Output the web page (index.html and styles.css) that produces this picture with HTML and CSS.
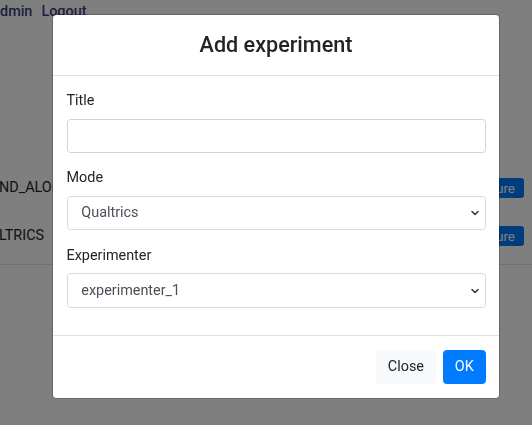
FILE: index.html
```html
<!DOCTYPE html>
<html lang="en">
<head>
<meta charset="utf-8">
<title>Add experiment</title>
<link rel="stylesheet" href="styles.css">
</head>
<body>
<div class="page">
  <nav class="topnav">
    <a class="nav-link nav-first">Admin</a>
    <a class="nav-link">Logout</a>
  </nav>
  <div class="table">
    <div class="table-row">
      <span class="cell-mode">STAND_ALONE</span>
      <button class="btn-configure">Configure</button>
    </div>
    <div class="table-row">
      <span class="cell-mode cell-mode-q">QUALTRICS</span>
      <button class="btn-configure">Configure</button>
    </div>
  </div>
</div>

<div class="backdrop"></div>

<div class="modal">
  <div class="modal-content">
    <div class="modal-header">
      <h4 class="modal-title">Add experiment</h4>
    </div>
    <div class="modal-body">
      <div class="form-group">
        <label class="form-label">Title</label>
        <input class="form-control" type="text">
      </div>
      <div class="form-group">
        <label class="form-label">Mode</label>
        <div class="select-wrap">
          <select class="form-select"><option>Qualtrics</option></select>
          <svg class="chevron" width="8" height="5" viewBox="0 0 8 5"><path d="M1 1L4 4L7 1" fill="none" stroke="#343a40" stroke-width="1.6" stroke-linecap="round" stroke-linejoin="round"/></svg>
        </div>
      </div>
      <div class="form-group">
        <label class="form-label">Experimenter</label>
        <div class="select-wrap">
          <select class="form-select"><option>experimenter_1</option></select>
          <svg class="chevron" width="8" height="5" viewBox="0 0 8 5"><path d="M1 1L4 4L7 1" fill="none" stroke="#343a40" stroke-width="1.6" stroke-linecap="round" stroke-linejoin="round"/></svg>
        </div>
      </div>
    </div>
    <div class="modal-footer">
      <button class="btn btn-light">Close</button>
      <button class="btn btn-primary">OK</button>
    </div>
  </div>
</div>
</body>
</html>
```

FILE: styles.css
```css
html, body {
  margin: 0;
  padding: 0;
}
body {
  width: 532px;
  height: 425px;
  overflow: hidden;
  background: #fff;
  font-family: Roboto, "Liberation Sans", sans-serif;
  font-size: 14.4px;
  line-height: 1.5;
  color: #212529;
}

/* background page */
.page {
  display: flex;
  flex-direction: column;
}
.topnav {
  display: flex;
  gap: 9px;
  padding-top: 1px;
}
.nav-link {
  color: #3a4080;
  font-weight: 500;
  line-height: 21.6px;
}
.nav-first {
  margin-left: -9.5px;
}
.table {
  margin-top: 141.4px;
  padding-bottom: 4px;
  border-bottom: 1px solid #dee2e6;
}
.table-row {
  display: flex;
  align-items: center;
  justify-content: space-between;
  height: 48px;
}
.cell-mode {
  margin-left: -27px;
  color: #212529;
  line-height: 21.6px;
}
.cell-mode-q {
  margin-left: -29.5px;
}
.btn-configure {
  margin-right: 8px;
  height: 20px;
  padding: 0 9px;
  border: none;
  border-radius: 3px;
  background: #007bff;
  color: #fff;
  font-family: Roboto, "Liberation Sans", sans-serif;
  font-size: 13.5px;
  line-height: 20px;
}

/* backdrop + modal */
.backdrop {
  position: fixed;
  inset: 0;
  background: rgba(0, 0, 0, 0.5);
}
.modal {
  position: fixed;
  inset: 0;
  padding: 14px 0 0 52px;
}
.modal-content {
  width: 448px;
  box-sizing: border-box;
  background: #fff;
  background-clip: padding-box;
  border: 1px solid rgba(0, 0, 0, 0.2);
  border-radius: 4.3px;
}
.modal-header {
  padding: 13.5px 13.5px 14.5px;
  border-bottom: 1px solid #dee2e6;
}
.modal-title {
  margin: 0;
  font-size: 21.6px;
  font-weight: 500;
  line-height: 32.4px;
  text-align: center;
  color: #212529;
}
.modal-body {
  padding: 13.5px;
}
.form-group {
  margin-bottom: 14.4px;
}
.form-label {
  display: block;
  margin-bottom: 7.2px;
  line-height: 21.6px;
  color: #212529;
}
.form-control,
.form-select {
  display: block;
  width: 100%;
  height: 34.2px;
  box-sizing: border-box;
  padding: 5.4px 10.8px;
  font-family: Roboto, "Liberation Sans", sans-serif;
  font-size: 14.4px;
  line-height: 21.6px;
  color: #495057;
  background: #fff;
  border: 1px solid #ced4da;
  border-radius: 3.6px;
  outline: none;
}
.select-wrap {
  position: relative;
}
.form-select {
  appearance: none;
  -webkit-appearance: none;
  padding-left: 13.8px;
  border-color: #d6dadf;
}
.chevron {
  position: absolute;
  right: 7px;
  top: 50%;
  transform: translateY(-50%);
}
.modal-footer {
  display: flex;
  justify-content: flex-end;
  gap: 7.2px;
  padding: 13.5px 13.5px 14px;
  border-top: 1px solid #dee2e6;
}
.btn {
  height: 34.2px;
  padding: 0 10.8px;
  font-family: Roboto, "Liberation Sans", sans-serif;
  font-size: 14.4px;
  line-height: 21.6px;
  border: 1px solid transparent;
  border-radius: 3.6px;
}
.btn-light {
  background: #f8f9fa;
  border-color: #f8f9fa;
  color: #212529;
}
.btn-primary {
  background: #007bff;
  border-color: #007bff;
  color: #fff;
}
```
